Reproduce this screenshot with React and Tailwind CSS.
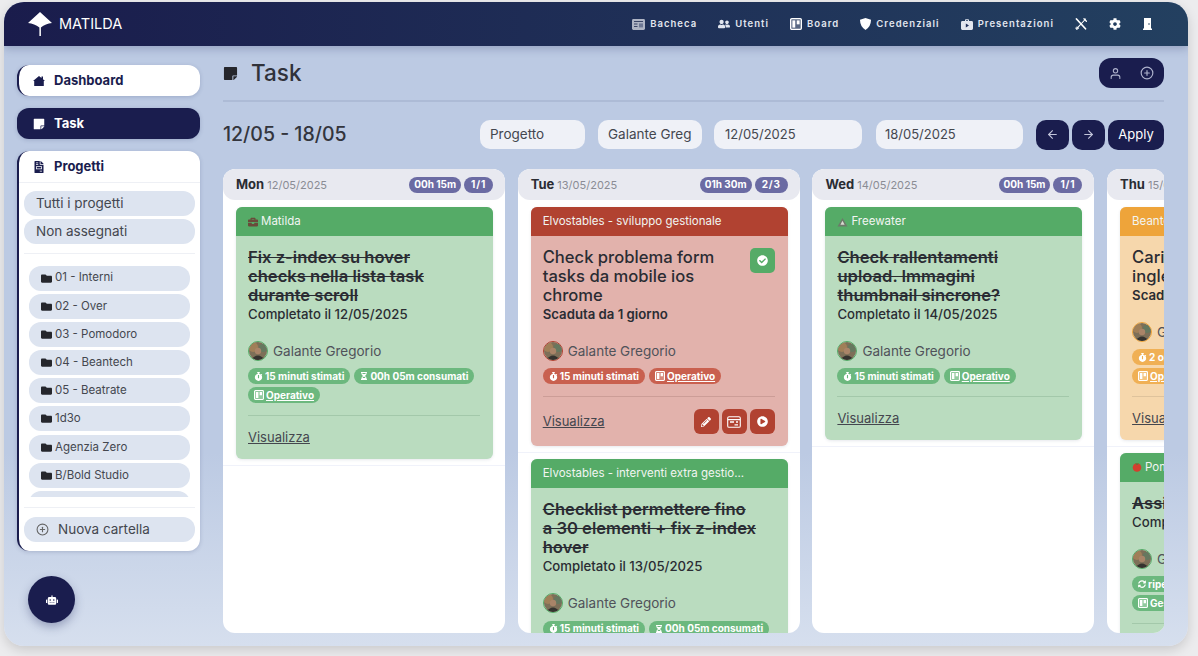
import React from "react";
import { FaStickyNote, FaFileInvoice, FaFolder, FaUserFriends, FaCog, FaRobot, FaStopwatch, FaHourglassHalf, FaCheckCircle, FaPencilAlt, FaPlayCircle, FaBriefcase, FaSyncAlt } from "react-icons/fa";
import { FiUser, FiPlusCircle, FiArrowLeft, FiArrowRight } from "react-icons/fi";

const THEMES = {
  green: { head: "bg-[#55ab67]", body: "bg-[#badcbf]", chip: "bg-[#6cb87e]", ring: "border-[#55ab67]", line: "border-[#a3c8aa]" },
  red: { head: "bg-[#b14231]", body: "bg-[#e2b2ac]", chip: "bg-[#c9604f]", ring: "border-[#b14231]", line: "border-[#cc9d97]" },
  orange: { head: "bg-[#eea43a]", body: "bg-[#f6d7ac]", chip: "bg-[#f0b055]", ring: "border-[#eea43a]", line: "border-[#dfc39c]" },
};

function Logo() {
  return (
    <svg width="24" height="24" viewBox="0 0 24 24" fill="white" className="shrink-0">
      <path d="M12 0 L24 11 Q17.5 11.5 12.9 15.5 L12.9 24 L11.4 24 L11.4 15.5 Q6.5 11.5 0 11 Z" />
    </svg>
  );
}

function Avatar({ ring }) {
  return (
    <span className={`w-[20px] h-[20px] rounded-full border-[1.5px] ${ring} overflow-hidden shrink-0`}>
      <svg viewBox="0 0 18 18" className="w-full h-full block">
        <rect width="18" height="18" fill="#7d6f58" />
        <circle cx="4" cy="5" r="5" fill="#a07f58" />
        <circle cx="14" cy="6" r="4" fill="#66785f" />
        <circle cx="9" cy="9" r="3.2" fill="#a98468" />
        <path d="M2 18 Q9 9 16 18 Z" fill="#35332f" />
      </svg>
    </span>
  );
}

function Tomato() {
  return (
    <svg width="10" height="10" viewBox="0 0 10 10" className="shrink-0">
      <circle cx="5" cy="5.5" r="4.3" fill="#d33f2e" />
      <path d="M3 1.5 H7 L5 3 Z" fill="#3f8a3c" />
    </svg>
  );
}

function TrekIcon() {
  return (
    <svg width="11" height="10" viewBox="0 0 11 10" className="shrink-0">
      <path d="M5.5 1 L10.5 9.5 H0.5 Z" fill="#6c7a6a" />
      <path d="M5.5 3.8 L7.6 7.8 H3.4 Z" fill="#d9d9d0" />
    </svg>
  );
}

function PanelIcon() {
  return (
    <svg width="14" height="12" viewBox="0 0 14 12" fill="none" stroke="white" strokeWidth="1.1">
      <rect x="0.7" y="0.7" width="12.6" height="10.6" rx="1.4" />
      <path d="M0.7 3.6 H13.3" />
      <path d="M3 6 H7 M7.5 8.8 H11 M9 6 L11 6" strokeWidth="1.3" />
    </svg>
  );
}

function HouseIcon() {
  return (
    <svg width="12" height="12" viewBox="0 0 12 12" fill="currentColor">
      <path d="M6 1 L8.5 3 V1.4 H10 V4.2 L12 6 H10.8 V11 H1.2 V6 H0 Z" />
    </svg>
  );
}

function BoardIcon({ className }) {
  return (
    <svg width="11" height="11" viewBox="0 0 11 11" className={className} fill="none">
      <rect x="0.6" y="0.6" width="9.8" height="9.8" rx="1" fill="currentColor" fillOpacity="0.25" stroke="currentColor" strokeWidth="1.2" />
      <rect x="2.2" y="2.2" width="2.6" height="6.6" fill="currentColor" />
      <rect x="6.2" y="2.2" width="2.6" height="3.6" fill="currentColor" />
    </svg>
  );
}

function NewsIcon() {
  return (
    <svg width="13" height="11" viewBox="0 0 13 11" fill="none">
      <rect width="13" height="11" rx="1.4" fill="#aeb4c4" />
      <path d="M2 2.5 H11 M2 5 H5.5 M2 7.5 H5.5" stroke="#3a4566" strokeWidth="1" />
      <rect x="7" y="4.4" width="4" height="4" fill="#6e7894" />
    </svg>
  );
}

function ShieldIcon() {
  return (
    <svg width="11" height="12" viewBox="0 0 11 12" fill="white">
      <path d="M5.5 0 L11 1.8 Q11 8.5 5.5 12 Q0 8.5 0 1.8 Z" />
    </svg>
  );
}

function PresentIcon() {
  return (
    <svg width="12" height="11" viewBox="0 0 12 11" fill="currentColor">
      <path d="M4 2 V1 Q4 0.2 4.8 0.2 H7.2 Q8 0.2 8 1 V2 H10.6 Q12 2 12 3.4 V9.6 Q12 11 10.6 11 H1.4 Q0 11 0 9.6 V3.4 Q0 2 1.4 2 Z M5 2 H7 V1.2 H5 Z" />
      <path d="M4.8 4.6 L8 6.5 L4.8 8.4 Z" fill="#20305a" />
    </svg>
  );
}

function ToolsIcon() {
  return (
    <svg width="12" height="12" viewBox="0 0 12 12" fill="none" stroke="white" strokeLinecap="round">
      <path d="M1.5 1 L10.5 10.8" strokeWidth="1.7" />
      <path d="M10.6 1 L1.5 10.8" strokeWidth="1.1" />
      <circle cx="2" cy="10.2" r="1.2" strokeWidth="0.8" />
      <path d="M9 0.8 L11.4 3.2" strokeWidth="1.3" />
    </svg>
  );
}

function DoorIcon() {
  return (
    <svg width="9" height="12" viewBox="0 0 9 12" fill="white">
      <path d="M1 0 H8 V10.6 H9 V12 H0 V10.6 H1 Z" />
      <circle cx="6" cy="6" r="0.8" fill="#24405f" />
    </svg>
  );
}

function NavLink({ icon, label }) {
  return (
    <span className="flex items-center gap-[5px] text-[9.5px] font-semibold tracking-[0.11em] text-[#e2e6ef]">
      {icon}
      {label}
    </span>
  );
}

function Side({ icon, label, active }) {
  return (
    <div className={`h-[31px] rounded-[12px] flex items-center pl-[14px] gap-[9px] pt-[1px] text-[13px] font-bold shadow-[0_1px_4px_rgba(40,50,100,0.2)] ${active ? "bg-[#1a1d4e] text-white" : "bg-white text-[#1a1d4e] border-l-2 border-[#1a1d4e]"}`}>
      <span className={`w-[12px] flex justify-center ${active ? "ml-[2px]" : ""}`}>{icon}</span>
      {label}
    </div>
  );
}

function Folder({ label }) {
  return (
    <div className="h-[25px] rounded-[12px] bg-[#dde4f0] flex items-center pl-[12px] gap-[3px] text-[11.5px] text-[#44474f] shrink-0">
      <FaFolder className="text-[11px] text-[#25262c]" />
      {label}
    </div>
  );
}

function Chip({ theme, icon, label, underline }) {
  return (
    <span className={`h-[16px] rounded-full ${THEMES[theme].chip} text-white text-[10px] font-bold flex items-center gap-[2px] px-[6px] whitespace-nowrap ${underline ? "underline" : ""}`}>
      {icon}
      {label}
    </span>
  );
}

function Card({ theme, project, projectIcon, title, strike, status, statusBold, chips, actions, check }) {
  const t = THEMES[theme];
  return (
    <div className="pl-[13px] pr-[12px] first:pt-[7px] pt-[6px] pb-[6px] border-b border-[#f0f2fa]">
      <div className={`rounded-[6px] overflow-hidden ${t.body} shadow-[0_1px_3px_rgba(60,70,110,0.12)]`}>
        <div className={`h-[29px] ${t.head} flex items-center gap-[3px] px-[12px] text-[11.5px] text-[#f2f5f2] whitespace-nowrap overflow-hidden`}>
          {projectIcon}
          {project}
        </div>
        <div className={`pl-[12px] pr-[13px] pt-[12px] ${actions ? "pb-[12px]" : "pb-[11px]"} w-[257px]`}>
          <div className="flex justify-between items-start">
            <div className={`text-[16.6px] leading-[19px] text-[#2a2c33] ${strike ? "font-semibold line-through" : "font-medium"} ${check ? "w-[200px]" : "w-[216px]"}`}>
              {title}
            </div>
            {check && (
              <span className="w-[25px] h-[25px] rounded-[5px] bg-[#55ab67] flex items-center justify-center text-white text-[11px] shrink-0">
                <FaCheckCircle />
              </span>
            )}
          </div>
          <div className={`text-[13.2px] leading-[19px] text-[#2a2c33] ${statusBold ? "font-semibold" : "font-medium"}`}>{status}</div>
          <div className="flex items-center gap-[5px] mt-[17px] text-[13.5px] text-[#50525a] whitespace-nowrap">
            <Avatar ring={t.ring} />
            Galante Gregorio
          </div>
          <div className="flex flex-wrap gap-x-[4px] gap-y-[3px] mt-[7px]">
            {chips.map((c) => (
              <Chip key={c.label} theme={theme} icon={c.icon} label={c.label} underline={c.underline} />
            ))}
          </div>
          <div className={`border-t ${t.line} mt-[12px]`} />
          <div className="flex items-center justify-between mt-[12px]">
            <span className="text-[13px] text-[#44464e] underline">Visualizza</span>
            {actions && (
              <div className="flex gap-[3px]">
                <span className="w-[25px] h-[25px] rounded-[6px] bg-[#b14231] flex items-center justify-center text-white text-[10px]"><FaPencilAlt /></span>
                <span className="w-[25px] h-[25px] rounded-[6px] bg-[#b14231] flex items-center justify-center"><PanelIcon /></span>
                <span className="w-[25px] h-[25px] rounded-[6px] bg-[#b14231] flex items-center justify-center text-white text-[11px]"><FaPlayCircle /></span>
              </div>
            )}
          </div>
        </div>
      </div>
    </div>
  );
}

function Column({ day, date, time, count, children, width = "w-[282px]" }) {
  return (
    <div className={`${width} h-[464px] bg-white rounded-[12px] overflow-hidden shrink-0`}>
      <div className="h-[31px] bg-[#e8e9f0] rounded-[12px] flex items-center justify-between pl-[13px] pr-[12px] w-[282px]">
        <span className="text-[11px] text-[#8a8c94] whitespace-nowrap">
          <span className="font-bold text-[#2a2c33] text-[13px]">{day}</span> {date}
        </span>
        <span className="flex gap-[3px] text-[10px] font-bold text-white">
          <span className="h-[16px] px-[5px] rounded-full bg-[#6b6ba3] flex items-center">{time}</span>
          <span className="h-[16px] px-[7px] rounded-full bg-[#6b6ba3] flex items-center tracking-[0.08em]">{count}</span>
        </span>
      </div>
      <div className="w-[282px]">{children}</div>
    </div>
  );
}

const alarm = <FaStopwatch className="text-[9px]" />;
const glass = <FaHourglassHalf className="text-[8px]" />;
const board = <BoardIcon className="w-[10px] h-[10px]" />;
const stimati = { icon: alarm, label: "15 minuti stimati" };
const consumati = { icon: glass, label: "00h 05m consumati" };
const operativo = { icon: board, label: "Operativo", underline: true };

export default function App() {
  return (
    <div className="w-[1198px] h-[656px] bg-[#ececee] pl-[4px] pt-[2px] overflow-hidden font-['Inter','Liberation_Sans',sans-serif]">
      <div className="w-[1184px] h-[644px] rounded-[20px] overflow-hidden flex flex-col bg-gradient-to-b from-[#bccae3] from-70% to-[#d6dfee] shadow-[0_4px_12px_rgba(0,0,0,0.15)]">
        <header className="h-[44px] shrink-0 bg-gradient-to-r from-[#1a1c4c] to-[#234060] flex items-center justify-between pl-[24px] pr-[36px] shadow-[0_3px_8px_rgba(40,50,100,0.25)] z-10">
          <div className="flex items-center gap-[7px] text-white text-[14.5px]">
            <Logo />
            MATILDA
          </div>
          <nav className="flex items-center text-[#e2e6ef]">
            <div className="flex items-center gap-[21px]">
              <NavLink icon={<NewsIcon />} label="Bacheca" />
              <NavLink icon={<FaUserFriends className="text-[12px]" />} label="Utenti" />
              <NavLink icon={<BoardIcon className="text-white w-[12px] h-[12px]" />} label="Board" />
              <NavLink icon={<ShieldIcon />} label="Credenziali" />
              <NavLink icon={<PresentIcon />} label="Presentazioni" />
            </div>
            <div className="flex items-center gap-[22px] ml-[21px] text-white">
              <ToolsIcon />
              <FaCog className="text-[12px]" />
              <DoorIcon />
            </div>
          </nav>
        </header>

        <div className="flex-1 flex min-h-0 pl-[13px] pr-[24px] pt-[19px]">
          <aside className="w-[183px] shrink-0 flex flex-col gap-[12px]">
            <Side icon={<HouseIcon />} label="Dashboard" />
            <Side active icon={<FaStickyNote className="text-[12px]" />} label="Task" />
            <div className="h-[400px] bg-white rounded-[12px] border-l-2 border-[#1a1d4e] flex flex-col shadow-[0_1px_4px_rgba(40,50,100,0.2)]">
              <div className="h-[32px] shrink-0 flex items-center pl-[14px] pt-[1px] gap-[9px] text-[13px] font-bold text-[#1a1d4e] border-b border-[#eef0f5]">
                <FaFileInvoice className="text-[12px] w-[12px]" />
                Progetti
              </div>
              <div className="px-[5px] pt-[8px] flex flex-col gap-[3px]">
                <div className="h-[25px] rounded-[12px] bg-[#dde4f0] flex items-center pl-[12px] text-[13.5px] text-[#44474f]">Tutti i progetti</div>
                <div className="h-[25px] rounded-[12px] bg-[#dde4f0] flex items-center pl-[12px] text-[13.5px] text-[#44474f]">Non assegnati</div>
              </div>
              <div className="mx-[5px] border-t border-[#eef0f5] mt-[9px]" />
              <div className="h-[232px] mt-[11px] pt-[0.5px] px-[10px] flex flex-col gap-[3.2px] overflow-hidden">
                <Folder label="01 - Interni" />
                <Folder label="02 - Over" />
                <Folder label="03 - Pomodoro" />
                <Folder label="04 - Beantech" />
                <Folder label="05 - Beatrate" />
                <Folder label="1d3o" />
                <Folder label="Agenzia Zero" />
                <Folder label="B/Bold Studio" />
                <Folder label="" />
              </div>
              <div className="mx-[5px] border-t border-[#eef0f5] mt-[10px]" />
              <div className="mx-[5px] mt-[9px] h-[25px] rounded-[12px] bg-[#dde4f0] flex items-center pl-[12px] gap-[9px] text-[13.5px] text-[#44474f]">
                <FiPlusCircle className="text-[13px] text-[#666]" />
                Nuova cartella
              </div>
            </div>
            <div className="ml-[11px] mt-[13px] w-[47px] h-[47px] rounded-full bg-[#1a1d4e] flex items-center justify-center text-white shadow-[0_4px_10px_rgba(40,50,100,0.35)]">
              <FaRobot className="text-[12px]" />
            </div>
          </aside>

          <main className="flex-1 ml-[23px] min-w-0 flex flex-col">
            <div className="h-[36px] flex items-center justify-between -mt-[10px]">
              <div className="flex items-center gap-[13px] text-[22.5px] font-medium text-[#30323a]">
                <FaStickyNote className="text-[15px] text-[#25262c]" />
                Task
              </div>
              <div className="w-[65px] h-[30px] rounded-[12px] bg-[#1a1d4e] flex items-center justify-center gap-[18px] text-[#aeb2cc] text-[13px]">
                <FiUser />
                <FiPlusCircle className="text-[14px]" />
              </div>
            </div>
            <div className="border-t-2 border-[#adbbd6] mt-[9px]" />
            <div className="flex items-center justify-between mt-[17px] h-[31px]">
              <div className="text-[19.5px] font-medium text-[#33353d]">12/05 - 18/05</div>
              <div className="flex items-center">
                <span className="w-[105px] h-[29px] rounded-[10px] bg-[#eff1f7] flex items-center pl-[10px] text-[13.5px] text-[#44474f]">Progetto</span>
                <span className="w-[104px] h-[29px] ml-[13px] rounded-[10px] bg-[#eff1f7] flex items-center pl-[10px] text-[13.5px] text-[#44474f]">Galante Greg</span>
                <span className="w-[148px] h-[29px] ml-[12px] rounded-[10px] bg-[#eff1f7] flex items-center pl-[11px] text-[13px] text-[#44474f]">12/05/2025</span>
                <span className="w-[147px] h-[29px] ml-[14px] rounded-[10px] bg-[#eff1f7] flex items-center pl-[9px] text-[13px] text-[#44474f]">18/05/2025</span>
                <span className="w-[33px] h-[30px] ml-[13px] rounded-[10px] bg-[#1a1d4e] flex items-center justify-center text-[#c4c7dc] text-[13px]"><FiArrowLeft /></span>
                <span className="w-[33px] h-[30px] ml-[3px] rounded-[10px] bg-[#1a1d4e] flex items-center justify-center text-[#c4c7dc] text-[13px]"><FiArrowRight /></span>
                <span className="w-[56px] h-[30px] ml-[3px] rounded-[10px] bg-[#1a1d4e] flex items-center justify-center text-white text-[13px]">Apply</span>
              </div>
            </div>
            <div className="flex gap-[12.7px] mt-[19px] overflow-hidden">
              <Column day="Mon" date="12/05/2025" time="00h 15m" count="1/1">
                <Card theme="green" project="Matilda" projectIcon={<FaBriefcase className="text-[10px] text-[#6a4a3a]" />} title="Fix z-index su hover checks nella lista task durante scroll" strike status="Completato il 12/05/2025" chips={[stimati, consumati, operativo]} />
              </Column>
              <Column day="Tue" date="13/05/2025" time="01h 30m" count="2/3">
                <Card theme="red" project="Elvostables - sviluppo gestionale" title="Check problema form tasks da mobile ios chrome" status="Scaduta da 1 giorno" statusBold chips={[stimati, operativo]} actions check />
                <Card theme="green" project="Elvostables - interventi extra gestio..." title="Checklist permettere fino a 30 elementi + fix z-index hover" strike status="Completato il 13/05/2025" chips={[stimati, consumati]} />
              </Column>
              <Column day="Wed" date="14/05/2025" time="00h 15m" count="1/1">
                <Card theme="green" project="Freewater" projectIcon={<TrekIcon />} title="Check rallentamenti upload. Immagini thumbnail sincrone?" strike status="Completato il 14/05/2025" chips={[stimati, operativo]} />
              </Column>
              <Column day="Thu" date="15/05/2025" time="00h 45m" count="1/2" width="w-[58px]">
                <Card theme="orange" project="Beantech" title="Caricare contenuti sito inglese" status="Scaduta da 1 giorno" statusBold chips={[{ icon: alarm, label: "2 ore stimate" }, { icon: glass, label: "00h 45m consumati" }, operativo]} />
                <Card theme="green" project="Pomodoro" projectIcon={<Tomato />} title="Assistenza clienti" strike status="Completato il 15/05/2025" chips={[{ icon: <FaSyncAlt className="text-[8px]" />, label: "ripetizione settimanale" }, { icon: board, label: "Gestione operativa del progetto" }]} />
              </Column>
            </div>
          </main>
        </div>
      </div>
    </div>
  );
}
